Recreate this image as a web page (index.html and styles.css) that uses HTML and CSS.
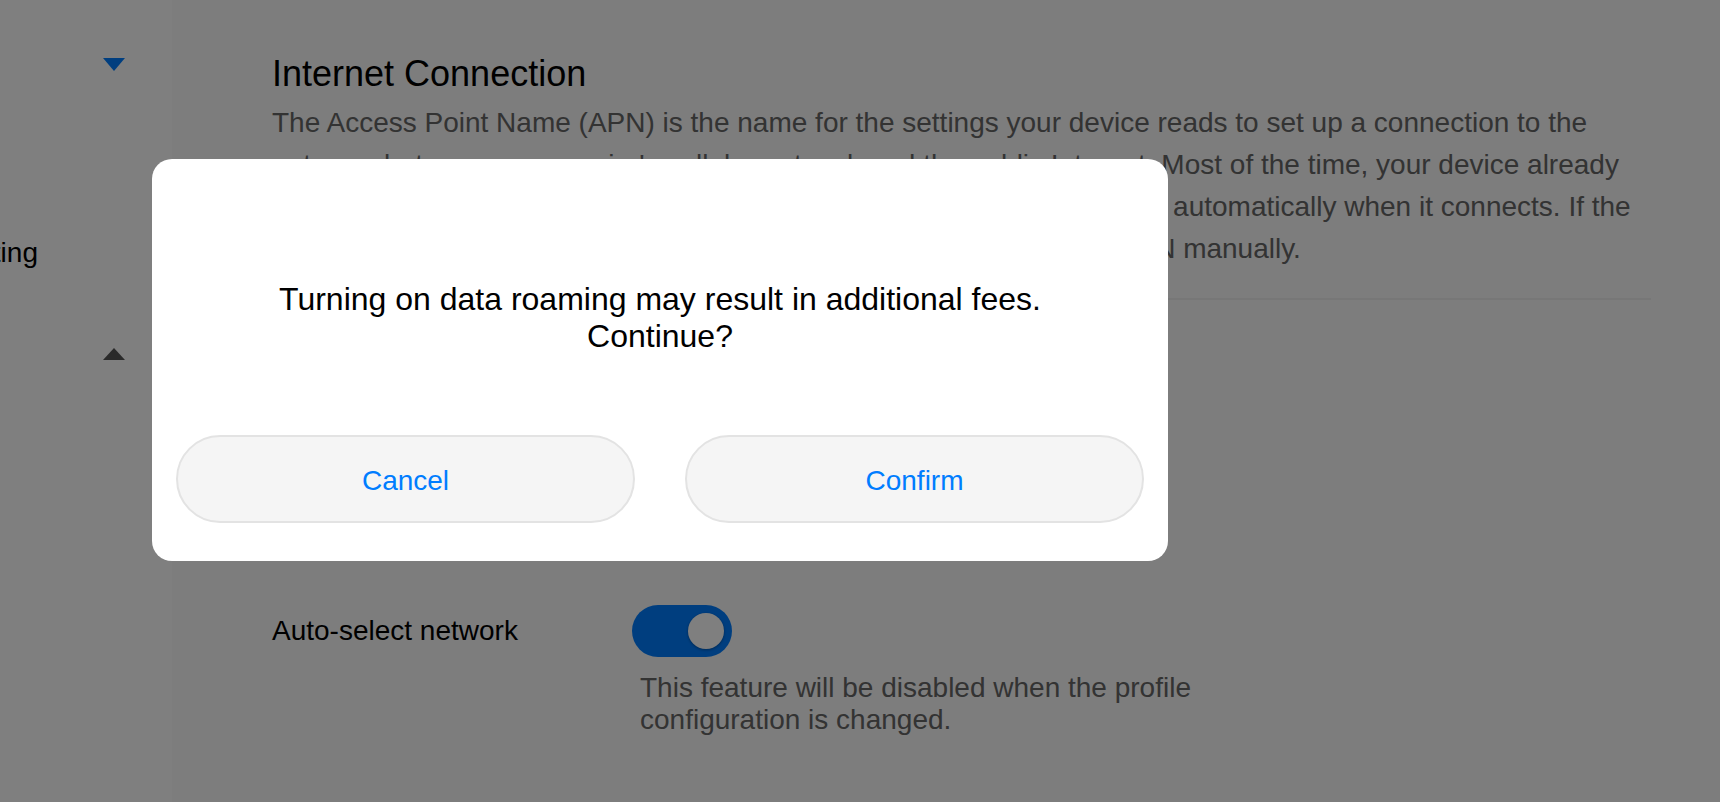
FILE: index.html
```html
<!DOCTYPE html>
<html lang="en">
<head>
<meta charset="utf-8">
<title>Mobile Network</title>
<link rel="stylesheet" href="styles.css">
</head>
<body>
<div class="page">
  <aside class="sidebar">
    <nav class="sidebar-track">
      <div class="nav-item nav-head" aria-label="Mobile Network">
        <span class="caret caret-down"></span>
      </div>
      <div class="nav-item nav-sub">
        <span class="nav-text">Network setting</span>
      </div>
      <div class="nav-item nav-head nav-head-low" aria-label="Advanced">
        <span class="caret caret-up"></span>
      </div>
    </nav>
  </aside>

  <main class="content">
    <h1 class="title">Internet Connection</h1>
    <p class="desc">The Access Point Name (APN) is the name for the settings your device reads to set up a connection to the gateway between your carrier's cellular network and the public Internet. Most of the time, your device already has the correct APN settings, or your carrier pushes them to your device automatically when it connects. If the connection to your carrier's network fails, you may need to enter the APN manually.</p>
    <div class="divider"></div>

    <div class="settings">
      <div class="row">
        <div class="row-label">Auto-select network</div>
        <div class="row-control">
          <div class="toggle"><span class="knob"></span></div>
          <p class="hint">This feature will be disabled when the profile configuration is changed.</p>
        </div>
      </div>
    </div>
  </main>
</div>

<div class="overlay">
  <div class="dialog" role="dialog">
    <p class="dialog-msg">Turning on data roaming may result in additional fees. Continue?</p>
    <div class="dialog-actions">
      <button class="btn" type="button">Cancel</button>
      <button class="btn" type="button">Confirm</button>
    </div>
  </div>
</div>
</body>
</html>
```

FILE: styles.css
```css
html, body {
  margin: 0;
  padding: 0;
  height: 100%;
}

body {
  font-family: "Liberation Sans", Arial, sans-serif;
  background: #ffffff;
  overflow: hidden;
}

.page {
  display: flex;
  height: 802px;
}

/* ---------- sidebar ---------- */
.sidebar {
  width: 172px;
  flex-shrink: 0;
  background: #ffffff;
  overflow: hidden;
}

.sidebar-track {
  display: block;
  width: 472px;
  margin-left: -300px;
  padding-top: 16px;
}

.nav-item {
  box-sizing: border-box;
  height: 96px;
  display: flex;
  align-items: center;
  justify-content: flex-end;
  padding: 0 47px 0 40px;
  font-size: 28px;
  color: #000000;
  white-space: nowrap;
}

.nav-sub {
  justify-content: flex-start;
  margin-top: 96px;
  padding-left: 145px;
  padding-bottom: 6px;
}

.nav-head-low {
  padding-top: 4px;
}

.caret {
  width: 0;
  height: 0;
  border-left: 11.5px solid transparent;
  border-right: 11.5px solid transparent;
}

.caret-down {
  border-top: 13px solid #007dff;
}

.caret-up {
  border-bottom: 12px solid #555555;
}

/* ---------- content ---------- */
.content {
  flex: 1;
  background: #fafafa;
  padding: 53px 69px 0 100px;
}

.title {
  margin: 0;
  font-size: 36px;
  line-height: 41px;
  font-weight: normal;
  color: #000000;
}

.desc {
  margin: 8px 0 0;
  font-size: 28px;
  line-height: 42px;
  color: #666666;
}

.divider {
  height: 2px;
  background: #eeeeee;
  margin-top: 28px;
}

.settings {
  display: flex;
  flex-direction: column;
  padding-top: 305px;
}

.row {
  display: grid;
  grid-template-columns: 360px auto;
}

.row-label {
  height: 52px;
  display: flex;
  align-items: center;
  font-size: 28px;
  color: #000000;
}

.toggle {
  box-sizing: border-box;
  width: 100px;
  height: 52px;
  border-radius: 26px;
  background: #007dff;
  display: flex;
  align-items: center;
  justify-content: flex-end;
  padding: 0 8px;
}

.knob {
  width: 36px;
  height: 36px;
  border-radius: 50%;
  background: #ffffff;
  box-shadow: 0 1px 3px rgba(0, 0, 0, 0.35);
}

.hint {
  margin: 15px 0 0 8px;
  max-width: 600px;
  font-size: 28px;
  color: #666666;
}

/* ---------- dialog ---------- */
.overlay {
  position: fixed;
  inset: 0;
  background: rgba(0, 0, 0, 0.5);
  display: flex;
  align-items: flex-start;
  box-sizing: border-box;
  padding: 159px 0 0 152px;
}

.dialog {
  box-sizing: border-box;
  width: 1016px;
  background: #ffffff;
  border-radius: 20px;
  padding: 122px 24px 38px;
}

.dialog-msg {
  margin: 0;
  padding: 0 80px;
  font-size: 32px;
  line-height: 37px;
  text-align: center;
  color: #000000;
}

.dialog-actions {
  display: flex;
  gap: 50px;
  margin-top: 80px;
}

.btn {
  flex: 1;
  height: 88px;
  border-radius: 44px;
  border: 2px solid #e3e3e3;
  background: #f5f5f5;
  color: #007dff;
  font-family: "Liberation Sans", Arial, sans-serif;
  font-size: 28px;
  padding: 4px 0 0;
  cursor: pointer;
}
```
